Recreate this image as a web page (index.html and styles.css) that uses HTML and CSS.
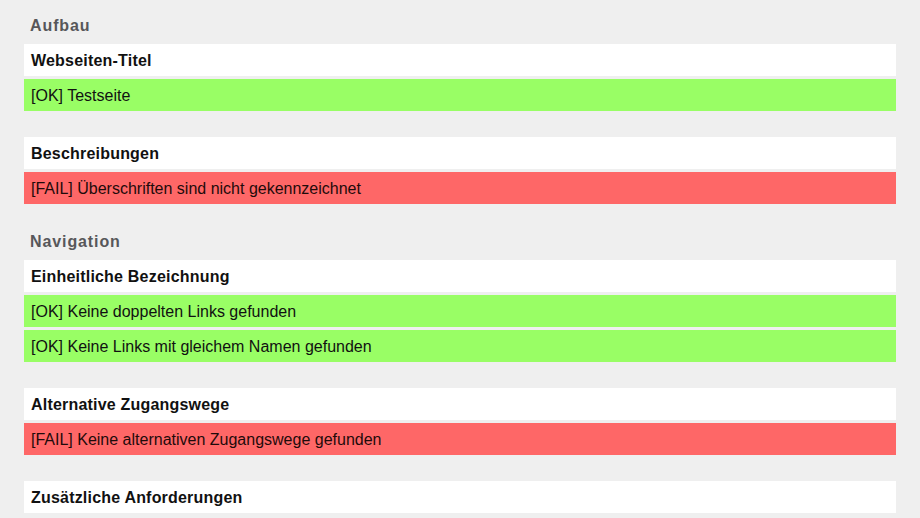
FILE: index.html
```html
<!DOCTYPE html>
<html lang="de">
<head>
<meta charset="utf-8">
<title>Testergebnisse</title>
<link rel="stylesheet" href="styles.css">
</head>
<body>
<main class="report">
  <section class="section">
    <h2 class="section-title">Aufbau</h2>
    <div class="group">
      <div class="item item-title">Webseiten-Titel</div>
      <div class="item item-ok">[OK] Testseite</div>
    </div>
    <div class="group">
      <div class="item item-title">Beschreibungen</div>
      <div class="item item-fail">[FAIL] Überschriften sind nicht gekennzeichnet</div>
    </div>
  </section>
  <section class="section">
    <h2 class="section-title">Navigation</h2>
    <div class="group">
      <div class="item item-title">Einheitliche Bezeichnung</div>
      <div class="item item-ok">[OK] Keine doppelten Links gefunden</div>
      <div class="item item-ok">[OK] Keine Links mit gleichem Namen gefunden</div>
    </div>
    <div class="group">
      <div class="item item-title">Alternative Zugangswege</div>
      <div class="item item-fail">[FAIL] Keine alternativen Zugangswege gefunden</div>
    </div>
    <div class="group">
      <div class="item item-title">Zusätzliche Anforderungen</div>
    </div>
  </section>
</main>
</body>
</html>
```
FILE: styles.css
```css
html, body {
  margin: 0;
  padding: 0;
  background: #efefef;
}

body {
  font-family: "Liberation Sans", Arial, sans-serif;
  color: #111;
  overflow: hidden;
}

.report {
  padding: 14px 24px 0 24px;
}

.section-title {
  margin: 0 0 8px 0;
  padding: 2px 0 0 6px;
  font-size: 16px;
  line-height: 20px;
  font-weight: bold;
  letter-spacing: 0.9px;
  color: #57575a;
}

.group {
  display: flex;
  flex-direction: column;
  gap: 3px;
  margin-bottom: 26px;
}

.item {
  padding: 8px 7px 6px 7px;
  font-size: 16px;
  line-height: 18px;
  color: #111;
}

.item-title {
  background: #ffffff;
  font-weight: bold;
  letter-spacing: 0.2px;
}

.item-ok {
  background: #99fe65;
}

.item-fail {
  background: #fe6767;
  color: #1e0b0b;
}
```
